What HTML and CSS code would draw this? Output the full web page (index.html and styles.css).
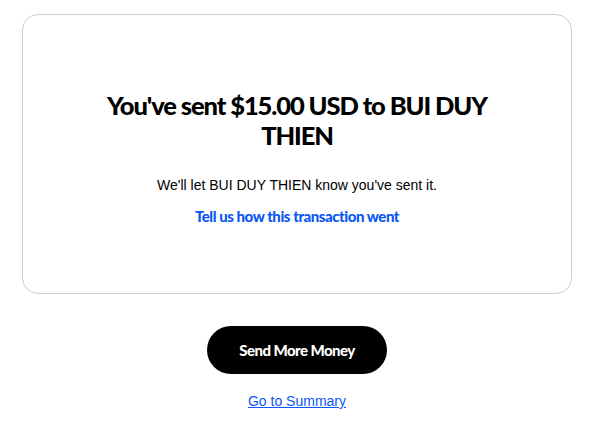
FILE: index.html
```html
<!DOCTYPE html>
<html>
<head>
<meta charset="utf-8">
<link rel="stylesheet" href="styles.css">
</head>
<body>
<div class="page">
  <div class="card">
    <h1 class="title">You've sent $15.00 USD to BUI DUY THIEN</h1>
    <p class="note">We'll let BUI DUY THIEN know you've sent it.</p>
    <a class="feedback" href="#">Tell us how this transaction went</a>
  </div>
  <div class="actions">
    <button class="primary">Send More Money</button>
    <a class="summary" href="#">Go to Summary</a>
  </div>
</div>
</body>
</html>
```
FILE: styles.css
```css
html, body {
  margin: 0;
  padding: 0;
  background: #ffffff;
}
.page {
  padding: 14px 27px 0 22px;
  font-family: "Liberation Sans", Arial, sans-serif;
  color: #000;
}
.card {
  box-sizing: border-box;
  height: 280px;
  border: 1px solid #cccccc;
  border-radius: 16px;
  display: flex;
  flex-direction: column;
  align-items: center;
  padding-top: 75px;
}
.title {
  margin: 0;
  width: 400px;
  text-align: center;
  font-family: Lato, sans-serif;
  font-weight: 900;
  font-size: 25.5px;
  line-height: 30px;
  letter-spacing: -1.1px;
}
.note {
  margin: 25px 0 0;
  font-size: 14px;
  line-height: 20px;
}
.feedback {
  margin-top: 11px;
  font-family: Lato, sans-serif;
  font-weight: 900;
  font-size: 15px;
  line-height: 20px;
  color: #0a57f5;
  text-decoration: none;
  letter-spacing: -0.45px;
}
.actions {
  display: flex;
  flex-direction: column;
  align-items: center;
  padding-top: 32px;
}
.primary {
  width: 180px;
  height: 48px;
  border: none;
  border-radius: 24px;
  background: #000;
  color: #fff;
  font-family: Lato, sans-serif;
  font-weight: 900;
  font-size: 15px;
  letter-spacing: -0.55px;
  cursor: pointer;
}
.summary {
  margin-top: 18px;
  font-size: 14px;
  line-height: 18px;
  color: #0a57f5;
  text-decoration: underline;
}
```
